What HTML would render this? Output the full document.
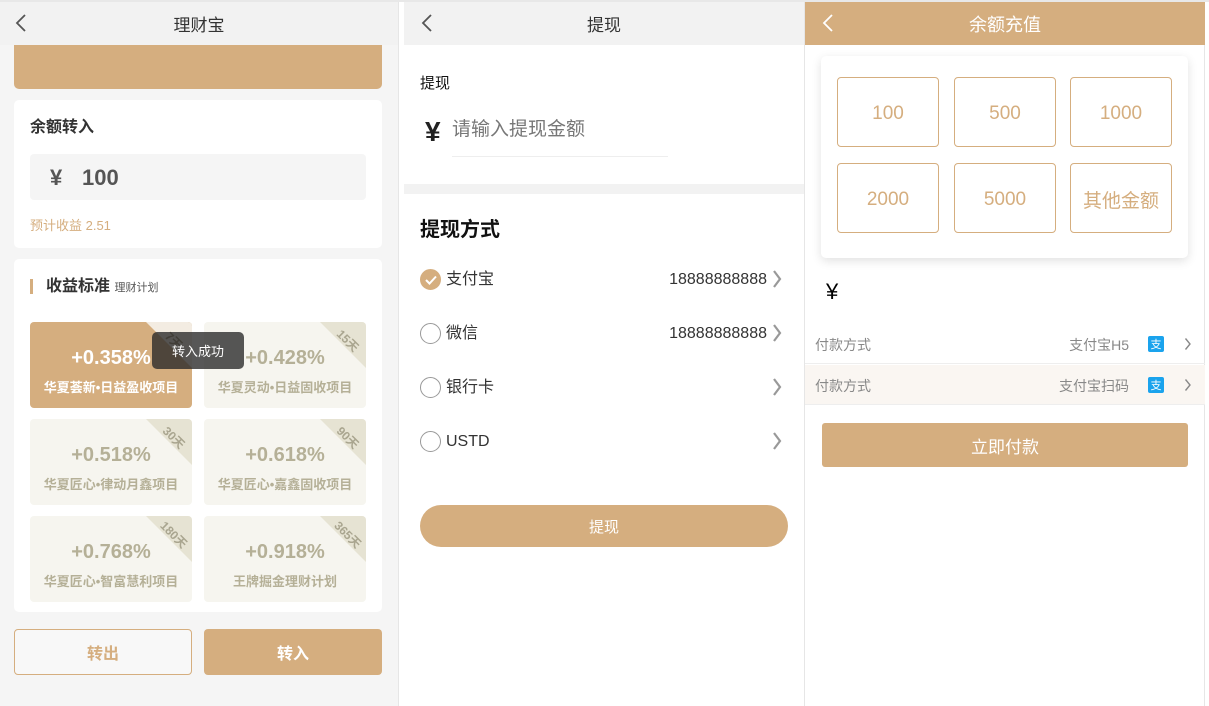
<!DOCTYPE html>
<html><head><meta charset="utf-8"><style>
*{margin:0;padding:0;box-sizing:border-box}
body{width:1209px;height:706px;background:#fff;font-family:"Liberation Sans","Noto Sans CJK SC",sans-serif;position:relative;overflow:hidden}
.a{position:absolute}
.c{display:flex;align-items:center;justify-content:center}
.gold{background:#d5ae7f}
.tile{position:absolute;width:162px;height:86px;background:#f6f5ef;border-radius:4px;overflow:hidden;text-align:center}
.tile .tri{position:absolute;right:0;top:0;width:0;height:0;border-top:46px solid #e6e3d3;border-left:46px solid transparent}
.tile .d{position:absolute;right:-2px;top:10px;transform:rotate(45deg);font-size:12px;font-weight:bold;color:#a9a58f;width:40px;text-align:center}
.tile .p{position:absolute;left:0;right:0;top:24px;line-height:24px;font-size:20px;font-weight:bold;color:#b5b097}
.tile .n{position:absolute;left:0;right:0;top:57px;line-height:18px;font-size:13px;font-weight:bold;color:#b5b097;white-space:nowrap}
.radio{position:absolute;left:420px;width:21px;height:21px;border:1.5px solid #999;border-radius:50%}
.lbl{position:absolute;left:446px;font-size:16px;line-height:21px;color:#333}
.num{position:absolute;right:442px;font-size:16px;line-height:21px;color:#333;text-align:right}
.chev{position:absolute;left:771px}
.amt{position:absolute;width:102px;height:70px;border:1px solid #d5ae7f;border-radius:4px;color:#d5ae7f;font-size:19px;display:flex;align-items:center;justify-content:center;padding-top:3px}
</style></head><body>
<div class="a" style="left:0;top:0;width:1209px;height:2px;background:#e8e8e8"></div>
<!-- panel 1 -->
<div class="a" style="left:0;top:2px;width:399px;height:704px;background:#f5f5f5;border-right:1px solid #e6e6e6"></div>
<div class="a c" style="left:0;top:2px;width:398px;height:43px;background:#f2f2f2;font-size:17px;color:#333">理财宝</div>
<svg class="a" style="left:14px;top:13px" width="14" height="20"><path d="M11 2 L3 10 L11 18" fill="none" stroke="#555" stroke-width="1.8"/></svg>
<div class="a gold" style="left:14px;top:45px;width:368px;height:44px;border-radius:0 0 5px 5px"></div>
<div class="a" style="left:14px;top:100px;width:368px;height:148px;background:#fff;border-radius:5px"></div>
<div class="a" style="left:30px;top:118px;font-size:16px;line-height:20px;font-weight:bold;color:#333">余额转入</div>
<div class="a" style="left:30px;top:154px;width:336px;height:46px;background:#f5f5f5;border-radius:4px"></div>
<div class="a" style="left:50px;top:165px;font-size:22px;line-height:26px;font-weight:bold;color:#555">¥</div>
<div class="a" style="left:82px;top:165px;font-size:22px;line-height:26px;font-weight:bold;color:#555">100</div>
<div class="a" style="left:30px;top:217px;font-size:13px;line-height:18px;color:#d5ae7f">预计收益 2.51</div>
<div class="a" style="left:14px;top:259px;width:368px;height:353px;background:#fff;border-radius:5px"></div>
<div class="a gold" style="left:30px;top:279px;width:3px;height:15px"></div>
<div class="a" style="left:46px;top:276px;font-size:16px;line-height:22px;font-weight:bold;color:#333">收益标准 <span style="font-size:11px;font-weight:normal;color:#555">理财计划</span></div>
<div class="tile" style="left:30px;top:322px;background:#d5ae7f"><div class="tri" style="border-top-color:#f3ece2"></div><div class="d" style="color:#9a8a70">7天</div><div class="p" style="color:#fff">+0.358%</div><div class="n" style="color:#fff">华夏荟新•日益盈收项目</div></div>
<div class="tile" style="left:204px;top:322px"><div class="tri"></div><div class="d">15天</div><div class="p">+0.428%</div><div class="n">华夏灵动•日益固收项目</div></div>
<div class="tile" style="left:30px;top:419px"><div class="tri"></div><div class="d">30天</div><div class="p">+0.518%</div><div class="n">华夏匠心•律动月鑫项目</div></div>
<div class="tile" style="left:204px;top:419px"><div class="tri"></div><div class="d">90天</div><div class="p">+0.618%</div><div class="n">华夏匠心•嘉鑫固收项目</div></div>
<div class="tile" style="left:30px;top:516px"><div class="tri"></div><div class="d">180天</div><div class="p">+0.768%</div><div class="n">华夏匠心•智富慧利项目</div></div>
<div class="tile" style="left:204px;top:516px"><div class="tri"></div><div class="d">365天</div><div class="p">+0.918%</div><div class="n">王牌掘金理财计划</div></div>
<div class="a c" style="left:152px;top:332px;width:92px;height:37px;background:rgba(40,40,40,.78);border-radius:5px;color:#fff;font-size:13px">转入成功</div>
<div class="a c" style="left:14px;top:629px;width:178px;height:46px;border:1px solid #d5ae7f;border-radius:4px;background:#f8f8f8;color:#d5ae7f;font-size:16px;font-weight:bold">转出</div>
<div class="a c gold" style="left:204px;top:629px;width:178px;height:46px;border-radius:4px;color:#fff;font-size:16px;font-weight:bold">转入</div>
<!-- panel 2 -->
<div class="a" style="left:404px;top:2px;width:401px;height:704px;background:#fff;border-right:1px solid #e6e6e6"></div>
<div class="a c" style="left:404px;top:2px;width:400px;height:43px;background:#f2f2f2;font-size:17px;color:#333">提现</div>
<svg class="a" style="left:420px;top:13px" width="14" height="20"><path d="M11 2 L3 10 L11 18" fill="none" stroke="#555" stroke-width="1.8"/></svg>
<div class="a" style="left:420px;top:74px;font-size:15px;line-height:20px;color:#111">提现</div>
<div class="a" style="left:425px;top:116px;font-size:28px;line-height:32px;font-weight:bold;color:#222">¥</div>
<div class="a" style="left:452px;top:118px;font-size:19px;line-height:24px;color:#777">请输入提现金额</div>
<div class="a" style="left:452px;top:156px;width:216px;height:1px;background:#eee"></div>
<div class="a" style="left:404px;top:184px;width:400px;height:10px;background:#f2f2f2"></div>
<div class="a" style="left:420px;top:217px;font-size:20px;line-height:26px;font-weight:bold;color:#111">提现方式</div>
<div class="radio c" style="top:269px;background:#d5ae7f;border-color:#d5ae7f"><svg width="12" height="10"><path d="M1 5 L4.5 8.5 L11 1.5" fill="none" stroke="#fff" stroke-width="2"/></svg></div>
<div class="lbl" style="top:269px">支付宝</div><div class="num" style="top:269px">18888888888</div>
<div class="radio" style="top:323px"></div><div class="lbl" style="top:323px">微信</div><div class="num" style="top:323px">18888888888</div>
<div class="radio" style="top:377px"></div><div class="lbl" style="top:377px">银行卡</div>
<div class="radio" style="top:431px"></div><div class="lbl" style="top:431px">USTD</div>
<svg class="chev" style="top:269px" width="12" height="20"><path d="M3 2 L9 10 L3 18" fill="none" stroke="#999" stroke-width="2.2"/></svg>
<svg class="chev" style="top:323px" width="12" height="20"><path d="M3 2 L9 10 L3 18" fill="none" stroke="#999" stroke-width="2.2"/></svg>
<svg class="chev" style="top:377px" width="12" height="20"><path d="M3 2 L9 10 L3 18" fill="none" stroke="#999" stroke-width="2.2"/></svg>
<svg class="chev" style="top:431px" width="12" height="20"><path d="M3 2 L9 10 L3 18" fill="none" stroke="#999" stroke-width="2.2"/></svg>
<div class="a c gold" style="left:420px;top:505px;width:368px;height:42px;border-radius:21px;color:#fff;font-size:15px">提现</div>
<!-- panel 3 -->
<div class="a" style="left:805px;top:2px;width:400px;height:704px;background:#fff;border-right:1px solid #e6e6e6"></div>
<div class="a c gold" style="left:805px;top:2px;width:400px;height:43px;color:#fff;font-size:18px">余额充值</div>
<svg class="a" style="left:821px;top:13px" width="14" height="20"><path d="M11 2 L3 10 L11 18" fill="none" stroke="#fff" stroke-width="1.8"/></svg>
<div class="a" style="left:821px;top:56px;width:367px;height:202px;background:#fff;border-radius:5px;box-shadow:0 3px 10px rgba(0,0,0,.12)"></div>
<div class="amt" style="left:837px;top:77px">100</div>
<div class="amt" style="left:954px;top:77px">500</div>
<div class="amt" style="left:1070px;top:77px">1000</div>
<div class="amt" style="left:837px;top:163px">2000</div>
<div class="amt" style="left:954px;top:163px">5000</div>
<div class="amt" style="left:1070px;top:163px">其他金额</div>
<div class="a" style="left:826px;top:279px;font-size:22px;line-height:26px;color:#000">¥</div>
<div class="a" style="left:805px;top:324px;width:400px;height:40px;border-bottom:1px solid #eee"></div>
<div class="a" style="left:805px;top:365px;width:400px;height:40px;background:#faf6f2;border-bottom:1px solid #eee"></div>
<div class="a" style="left:815px;top:335px;font-size:14px;line-height:20px;color:#888">付款方式</div>
<div class="a" style="left:815px;top:376px;font-size:14px;line-height:20px;color:#888">付款方式</div>
<div class="a" style="right:80px;top:335px;font-size:14px;line-height:20px;color:#888">支付宝H5</div>
<div class="a" style="right:80px;top:376px;font-size:14px;line-height:20px;color:#888">支付宝扫码</div>
<div class="a c" style="left:1148px;top:336px;width:16px;height:16px;background:#1aa3ed;border-radius:2px;color:#fff;font-size:11px">支</div>
<div class="a c" style="left:1148px;top:377px;width:16px;height:16px;background:#1aa3ed;border-radius:2px;color:#fff;font-size:11px">支</div>
<svg class="a" style="left:1184px;top:337px" width="8" height="14"><path d="M1.5 1.5 L6 7 L1.5 12.5" fill="none" stroke="#888" stroke-width="1.4"/></svg>
<svg class="a" style="left:1184px;top:378px" width="8" height="14"><path d="M1.5 1.5 L6 7 L1.5 12.5" fill="none" stroke="#888" stroke-width="1.4"/></svg>
<div class="a c gold" style="left:822px;top:423px;width:366px;height:44px;border-radius:3px;color:#fff;font-size:17px">立即付款</div>
</body></html>
